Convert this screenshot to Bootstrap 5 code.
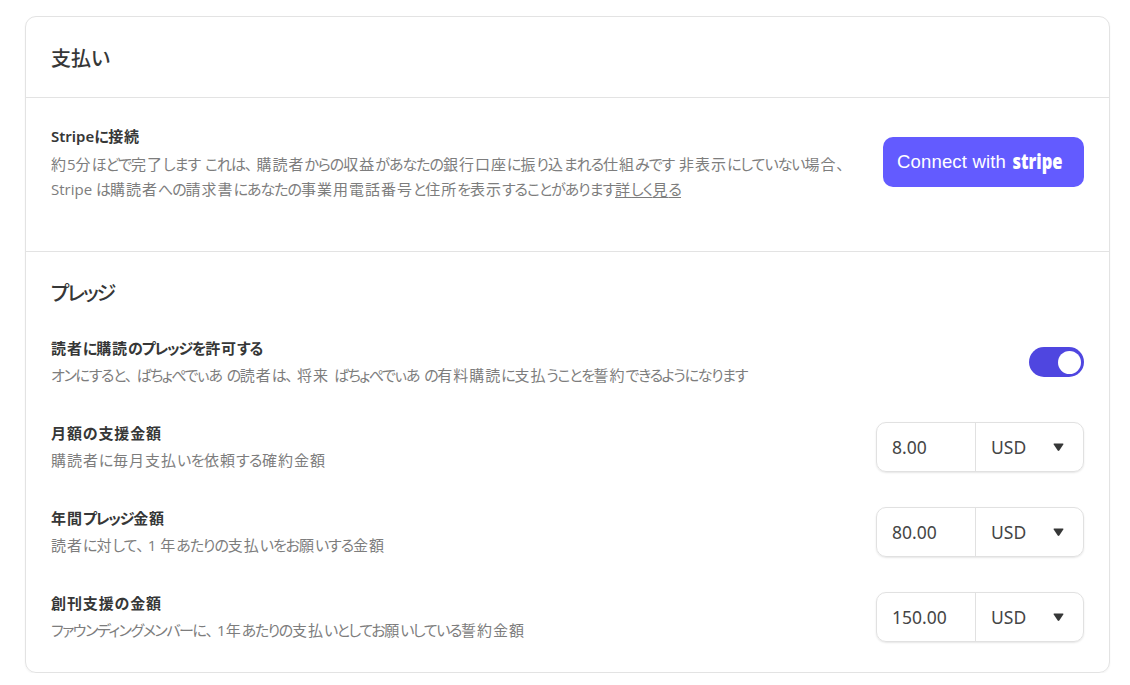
<!DOCTYPE html>
<html lang="ja">
<head>
<meta charset="utf-8">
<meta name="viewport" content="width=device-width, initial-scale=1">
<title>支払い</title>
<link href="https://cdn.jsdelivr.net/npm/bootstrap@5.3.0/dist/css/bootstrap.min.css" rel="stylesheet">
<style>
body{font-family:"Noto Sans","Noto Sans CJK JP",sans-serif;color:#363737;background:#fff;font-feature-settings:"palt"}
.panel{width:1085px;height:657px;margin:16px 0 0 25px;border:1px solid #e3e3e3;border-radius:11px;box-shadow:0 1px 2px rgba(0,0,0,.05)}
.sec-head{height:81px;padding:3px 25px 0;border-bottom:1px solid #e3e3e3}
.sec-stripe{height:154px;padding:26px 25px 0;border-bottom:1px solid #e3e3e3}
.sec-pledge{padding:27px 25px 0}
h2{font-size:20px;line-height:30px;font-weight:500;margin:0}
h3{font-size:15px;line-height:22px;font-weight:600;margin:0;letter-spacing:.9px;white-space:nowrap}
.desc{font-size:15px;line-height:25px;font-weight:400;color:#7d7d7d;letter-spacing:1px;margin:4px 0 0;white-space:nowrap;font-family:"Open Sans","Noto Sans CJK JP",sans-serif}
.sec-stripe h3{line-height:23px}
.desc u{text-underline-offset:2px}
.setting{height:85px}
.setting .about{margin-top:-1px}
.setting .desc{margin-top:3px}
.btn-stripe{width:201px;height:50px;border-radius:10px;background:#635bff;color:#fff;padding:0 0 0 14px;font:18.5px "Liberation Sans",sans-serif;margin-top:13px;border:0}
.btn-stripe:hover{background:#5148ee;color:#fff}
.wordmark{overflow:visible}
.toggle{width:55px;height:30px;border-radius:15px;background:#4f46e0;padding:4px 3px;margin-top:10px}
.knob{width:23px;height:23px;border-radius:50%;background:#fff}
.amount{width:208px;height:50px;border:1px solid #e1e1e1;border-radius:10px;box-shadow:0 1px 2px rgba(0,0,0,.1);font-size:17.5px;color:#454545}
.amount .val{width:99px;padding-left:15px;border-right:1px solid #e1e1e1}
.amount .cur{padding:0 18px 0 15px}
</style>
</head>
<body>
<main class="panel">
  <header class="sec-head d-flex align-items-center"><h2 class="fit" data-w="61">支払い</h2></header>
  <section class="sec-stripe d-flex justify-content-between align-items-start">
    <div>
      <h3 class="fit" data-w="89">Stripeに接続</h3>
      <p class="desc"><span class="fit" data-w="797">約5分ほどで完了します これは、購読者からの収益があなたの銀行口座に振り込まれる仕組みです 非表示にしていない場合、</span><br><span class="fit" data-w="564">Stripe は購読者への請求書にあなたの事業用電話番号と住所を表示することがあります</span><u class="fit" data-w="66">詳しく見る</u></p>
    </div>
    <button class="btn btn-stripe d-flex align-items-center flex-shrink-0" type="button"><span class="fit" data-w="109">Connect with</span>
      <svg class="wordmark ms-1" width="64" height="40" viewBox="0 0 64 40" aria-label="stripe"><text x="2.5" y="27" fill="#fff" font-family="Open Sans" font-weight="800" font-size="20.5" textLength="50" lengthAdjust="spacingAndGlyphs">stripe</text></svg>
    </button>
  </section>
  <section class="sec-pledge">
    <h2 class="fit" data-w="63">プレッジ</h2>
    <div class="pt-4 mt-1">
      <div class="setting d-flex justify-content-between align-items-start">
        <div class="about"><h3 class="fit" data-w="211">読者に購読のプレッジを許可する</h3><p class="desc"><span class="fit" data-w="696">オンにすると、ばちょぺでぃあ の読者は、将来 ばちょぺでぃあ の有料購読に支払うことを誓約できるようになります</span></p></div>
        <div class="toggle d-flex justify-content-end" role="switch" aria-checked="true"><div class="knob"></div></div>
      </div>
      <div class="setting d-flex justify-content-between align-items-start">
        <div class="about"><h3 class="fit" data-w="111">月額の支援金額</h3><p class="desc"><span class="fit" data-w="275">購読者に毎月支払いを依頼する確約金額</span></p></div>
        <div class="amount d-flex"><div class="val d-flex align-items-center">8.00</div><div class="cur d-flex flex-fill align-items-center justify-content-between">USD<svg width="13" height="9" viewBox="0 0 13 9"><path d="M2.2 .5h8.6q1 .1.5 1L7.3 7.6q-.8.9-1.6 0L1.7 1.5q-.5-.9.5-1z" fill="#363737"/></svg></div></div>
      </div>
      <div class="setting d-flex justify-content-between align-items-start">
        <div class="about"><h3 class="fit" data-w="114">年間プレッジ金額</h3><p class="desc"><span class="fit" data-w="334">読者に対して、1 年あたりの支払いをお願いする金額</span></p></div>
        <div class="amount d-flex"><div class="val d-flex align-items-center">80.00</div><div class="cur d-flex flex-fill align-items-center justify-content-between">USD<svg width="13" height="9" viewBox="0 0 13 9"><path d="M2.2 .5h8.6q1 .1.5 1L7.3 7.6q-.8.9-1.6 0L1.7 1.5q-.5-.9.5-1z" fill="#363737"/></svg></div></div>
      </div>
      <div class="setting d-flex justify-content-between align-items-start">
        <div class="about"><h3 class="fit" data-w="111">創刊支援の金額</h3><p class="desc"><span class="fit" data-w="474">ファウンディングメンバーに、1年あたりの支払いとしてお願いしている誓約金額</span></p></div>
        <div class="amount d-flex"><div class="val d-flex align-items-center">150.00</div><div class="cur d-flex flex-fill align-items-center justify-content-between">USD<svg width="13" height="9" viewBox="0 0 13 9"><path d="M2.2 .5h8.6q1 .1.5 1L7.3 7.6q-.8.9-1.6 0L1.7 1.5q-.5-.9.5-1z" fill="#363737"/></svg></div></div>
      </div>
    </div>
  </section>
</main>
<script src="https://cdn.jsdelivr.net/npm/bootstrap@5.3.0/dist/js/bootstrap.bundle.min.js"></script>
<script>
document.querySelectorAll('.fit').forEach(el => {
  const target = +el.dataset.w;
  el.style.display = 'inline-block';
  const text = el.textContent;
  const runs = text.match(/、|[\u3040-\u30ff]+|[\x00-\x7f]+|[^\u3040-\u30ff、\x00-\x7f]+/g);
  el.textContent = '';
  let kana = [], count = 0;
  runs.forEach(r => {
    const s = document.createElement('span');
    s.textContent = r;
    if (r === '、') s.style.letterSpacing = '4px';
    else if (r === ' ') s.style.letterSpacing = '1px';
    else if (/[\u3040-\u30ff]/.test(r)) { kana.push(s); count += r.length; s.style.letterSpacing = '0px'; }
    else if (/^[\x00-\x7f]+$/.test(r)) s.style.letterSpacing = '0px';
    el.append(s);
  });
  if (!kana.length) { kana = [...el.children]; count = text.length; }
  const ls = (target - el.getBoundingClientRect().width) / count;
  kana.forEach(s => s.style.letterSpacing = ls + 'px');
});
</script>
</body>
</html>
